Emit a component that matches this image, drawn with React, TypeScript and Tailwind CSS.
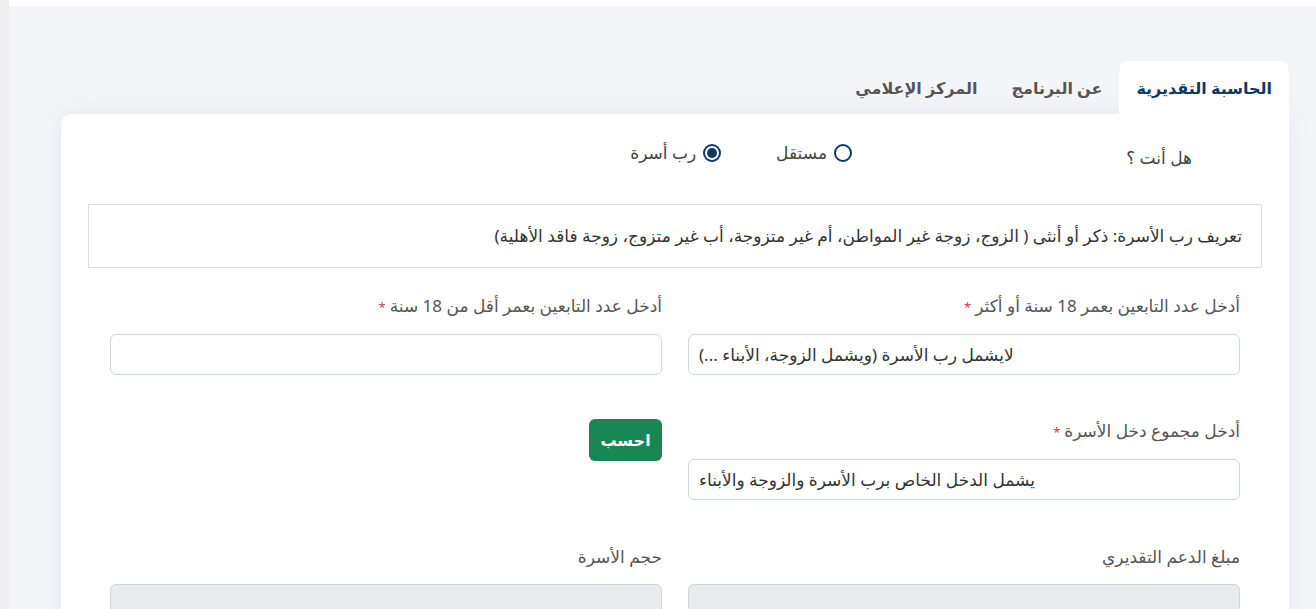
import { useState } from "react";

function Radio({ checked, label, onClick }: { checked: boolean; label: string; onClick: () => void }) {
  return (
    <button type="button" onClick={onClick} className="flex items-center gap-[7px] text-[17px] text-[#444]">
      <span className="w-[18px] h-[18px] rounded-full border-2 border-[#0b3a6a] flex items-center justify-center">
        {checked && <span className="w-[10px] h-[10px] rounded-full bg-[#0b3a6a]" />}
      </span>
      <span>{label}</span>
    </button>
  );
}

function Label({ text, required }: { text: string; required?: boolean }) {
  return (
    <div className="text-[17px] text-[#555] leading-[24px] mb-[15px]">
      {text}
      {required && <span className="text-[#dc3545] text-[13px] mr-[4px]">*</span>}
    </div>
  );
}

function Field({ placeholder, disabled }: { placeholder?: string; disabled?: boolean }) {
  return (
    <input
      type="text"
      disabled={disabled}
      placeholder={placeholder}
      className={`w-full h-[41px] rounded-[6px] border border-[#ced4da] px-[10px] text-[17px] text-left outline-none placeholder:text-[#333] ${
        disabled ? "bg-[#e9ecef]" : "bg-white"
      }`}
    />
  );
}

export default function App() {
  const [kind, setKind] = useState<"head" | "single">("head");
  const tabs = ["الحاسبة التقديرية", "عن البرنامج", "المركز الإعلامي"];

  return (
    <div className="flex min-h-screen" style={{ fontFamily: '"Noto Sans", "DejaVu Sans", sans-serif' }}>
      <div className="w-[9px] bg-[#efefef] shrink-0" />
      <div className="flex-1 flex flex-col" dir="rtl">
        <div className="h-[6px] bg-white" />
        <div className="flex-1 bg-[#f4f5f9] pt-[55px] pr-[27px] pl-[52px]">
          {/* Tabs */}
          <div className="flex">
            {tabs.map((t, i) => (
              <div
                key={t}
                className={`h-[53px] px-[17px] flex items-center text-[16px] font-bold rounded-t-[10px] ${
                  i === 0 ? "bg-white text-[#0b3a6a]" : "text-[#555]"
                }`}
              >
                {t}
              </div>
            ))}
          </div>

          {/* Card */}
          <div className="bg-white rounded-b-[10px] rounded-tl-[10px] shadow-[0_0_24px_rgba(30,40,80,0.07)] px-[27px] pt-[26px] pb-[40px]">
            <div className="flex items-start">
              <div className="mr-[70px] w-[55px] pt-[5px] text-[17px] text-[#444] whitespace-nowrap">هل أنت ؟</div>
              <div className="flex gap-[55px] mr-[285px]">
                <Radio checked={kind === "single"} label="مستقل" onClick={() => setKind("single")} />
                <Radio checked={kind === "head"} label="رب أسرة" onClick={() => setKind("head")} />
              </div>
            </div>

            <div className="mt-[33px] h-[64px] border border-[#dcdcdc] flex items-center px-[19px] text-[17px] text-[#333]">
              تعريف رب الأسرة: ذكر أو أنثى ( الزوج، زوجة غير المواطن، أم غير متزوجة، أب غير متزوج، زوجة فاقد الأهلية)
            </div>

            <div className="grid grid-cols-2 gap-x-[26px] px-[22px] mt-[26px]">
              <div>
                <Label text="أدخل عدد التابعين بعمر 18 سنة أو أكثر" required />
                <Field placeholder="لايشمل رب الأسرة (ويشمل الزوجة، الأبناء ...)" />
              </div>
              <div>
                <Label text="أدخل عدد التابعين بعمر أقل من 18 سنة" required />
                <Field />
              </div>

              <div className="mt-[44px]">
                <Label text="أدخل مجموع دخل الأسرة" required />
                <Field placeholder="يشمل الدخل الخاص برب الأسرة والزوجة والأبناء" />
              </div>
              <div className="mt-[44px]">
                <button
                  type="button"
                  className="h-[42px] w-[73px] rounded-[6px] bg-[#198754] text-white text-[16px] font-bold"
                >
                  احسب
                </button>
              </div>

              <div className="mt-[45px]">
                <Label text="مبلغ الدعم التقديري" />
                <Field disabled />
              </div>
              <div className="mt-[45px]">
                <Label text="حجم الأسرة" />
                <Field disabled />
              </div>
            </div>
          </div>
        </div>
      </div>
    </div>
  );
}
